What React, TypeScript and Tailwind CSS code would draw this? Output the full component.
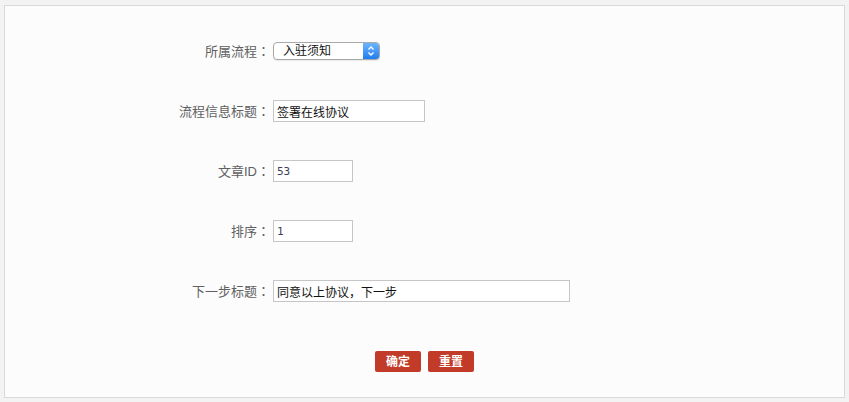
const cjk = "font-['Liberation_Sans','Noto_Sans_CJK_SC',sans-serif]";

function Label({ text }: { text: string }) {
  return (
    <div className={`w-[265px] text-right text-[13px] text-[#606060] ${cjk}`}>
      {text}
      <span className="font-['Noto_Sans_CJK_TC',sans-serif]">：</span>
    </div>
  );
}

function Field({ value, width, mono }: { value: string; width: string; mono?: boolean }) {
  return (
    <input
      readOnly
      defaultValue={value}
      className={`${width} ml-[3px] h-[22px] border border-[#c6c6c6] bg-white px-[3px] outline-none ${
        mono
          ? "font-['DejaVu_Sans_Mono',monospace] text-[11px] text-[#3a3f5c]"
          : `${cjk} text-[12px] text-[#111]`
      }`}
    />
  );
}

function FakeSelect() {
  return (
    <div className="ml-[3px] flex h-[18px] w-[107px] rounded-[4px] border border-[#a9a9a9] bg-white shadow-[0_1px_1px_rgba(0,0,0,0.08)]">
      <div className={`flex flex-1 items-center pl-[9px] text-[12px] text-[#111] ${cjk}`}>入驻须知</div>
      <div className="flex w-[16px] items-center justify-center rounded-r-[3px] bg-gradient-to-b from-[#6db4fb] to-[#1c7df0]">
        <svg width="8" height="12" viewBox="0 0 8 12" fill="none" stroke="white" strokeWidth="1.4">
          <path d="M1.5 4.5 L4 2 L6.5 4.5" />
          <path d="M1.5 7.5 L4 10 L6.5 7.5" />
        </svg>
      </div>
    </div>
  );
}

export default function App() {
  const rows = [
    { label: "所属流程", node: <FakeSelect /> },
    { label: "流程信息标题", node: <Field value="签署在线协议" width="w-[152px]" /> },
    { label: "文章ID", node: <Field value="53" width="w-[80px]" mono /> },
    { label: "排序", node: <Field value="1" width="w-[80px]" mono /> },
    { label: "下一步标题", node: <Field value="同意以上协议，下一步" width="w-[297px]" /> },
  ];

  return (
    <div className="min-h-[402px] bg-[#f3f3f3] px-[4px] pt-[5px]">
      <div className="h-[393px] border border-[#d9d9d9] bg-[#fcfcfc] pt-[15px]">
        {rows.map((r) => (
          <div key={r.label} className="flex h-[60px] items-center">
            <Label text={r.label} />
            {r.node}
          </div>
        ))}
        <div className="mt-[30px] flex justify-center gap-[7px]">
          <button className={`h-[21px] w-[46px] rounded-[2px] bg-[#c23b29] text-[12px] font-bold text-white ${cjk}`}>
            确定
          </button>
          <button className={`h-[21px] w-[46px] rounded-[2px] bg-[#c23b29] text-[12px] font-bold text-white ${cjk}`}>
            重置
          </button>
        </div>
      </div>
    </div>
  );
}
